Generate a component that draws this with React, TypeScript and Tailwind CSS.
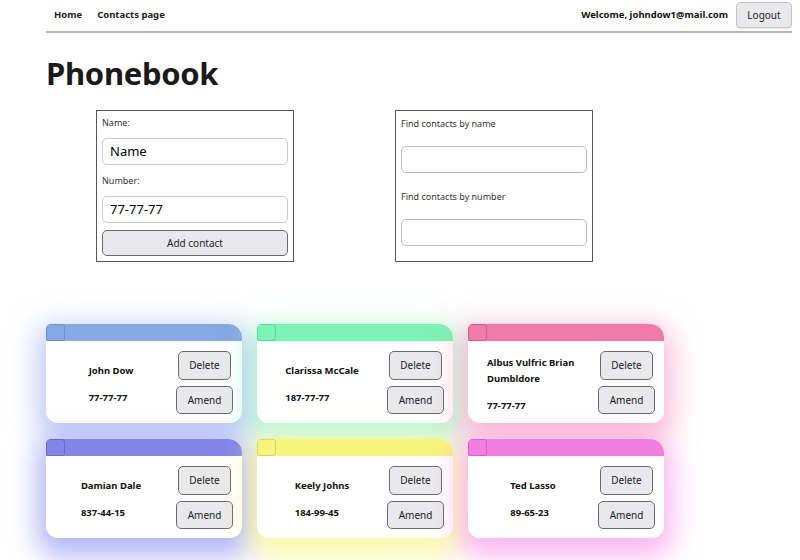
import React from "react";

const contacts = [
  { name: "John Dow", number: "77-77-77", head: "bg-[#86a8e4]", box: "border-[#7090cc]", shadow: "shadow-[0_10px_28px_8px_rgba(134,160,235,0.55)]" },
  { name: "Clarissa McCale", number: "187-77-77", head: "bg-[#7bf5b6]", box: "border-[#5fd89a]", shadow: "shadow-[0_10px_28px_8px_rgba(120,240,180,0.5)]" },
  { name: "Albus Vulfric Brian Dumbldore", number: "77-77-77", head: "bg-[#f27aa6]", box: "border-[#d65f8b]", shadow: "shadow-[0_10px_28px_8px_rgba(245,120,170,0.5)]" },
  { name: "Damian Dale", number: "837-44-15", head: "bg-[#8185ea]", box: "border-[#6569cf]", shadow: "shadow-[0_10px_28px_8px_rgba(125,128,240,0.6)]" },
  { name: "Keely Johns", number: "184-99-45", head: "bg-[#f7f57c]", box: "border-[#d9d760]", shadow: "shadow-[0_10px_28px_8px_rgba(245,245,110,0.6)]" },
  { name: "Ted Lasso", number: "89-65-23", head: "bg-[#f47de0]", box: "border-[#d860c4]", shadow: "shadow-[0_10px_28px_8px_rgba(245,120,225,0.55)]" },
];

const btn = "bg-[#e9e9ed] border border-[#6b6b6b] rounded-[5px] text-[10px] text-[#222] flex items-center justify-center";

function Card({ c }: { c: (typeof contacts)[number] }) {
  return (
    <div className={`w-[196px] h-[99px] bg-white rounded-[12px] rounded-tl-[5px] rounded-tr-[14px] overflow-hidden flex flex-col ${c.shadow}`}>
      <div className={`h-[17px] shrink-0 ${c.head}`}>
        <div className={`w-[19px] h-[17px] border ${c.box} rounded-[3px]`} />
      </div>
      <div className="flex-1 flex items-center pr-[9px]">
        <div className="flex-1 flex justify-center pt-[4px]">
          <div className="text-left font-bold text-[9.5px] text-[#111] w-max max-w-[92px]">
            <p className="leading-[16px]">{c.name}</p>
            <p className="leading-[16px] mt-[11px]">{c.number}</p>
          </div>
        </div>
        <div className="w-[57px] flex flex-col items-center gap-[6px] pt-[1px]">
          <button className={`${btn} w-[53px] h-[29px]`}>Delete</button>
          <button className={`${btn} w-[57px] h-[28px]`}>Amend</button>
        </div>
      </div>
    </div>
  );
}

export default function App() {
  return (
    <div className="min-h-[560px] bg-white text-[#222]" style={{ fontFamily: '"Noto Sans", "Open Sans", sans-serif' }}>
      <div className="ml-[46px] mr-[8px]">
        <nav className="h-[33px] flex items-center justify-between border-b-2 border-[#b5b5b5]">
          <div className="flex items-center gap-[15px] pl-[8px] font-bold text-[9.5px] text-[#222]">
            <span>Home</span>
            <span>Contacts page</span>
          </div>
          <div className="flex items-center gap-[8px] mb-[1px]">
            <span className="font-bold text-[9.5px] text-[#111]">Welcome, johndow1@mail.com</span>
            <button className="bg-[#e9e9ed] border border-[#c4c4c4] rounded-[4px] text-[10px] text-[#222] w-[56px] h-[26px] shadow-[0_1px_1px_rgba(0,0,0,0.1)]">Logout</button>
          </div>
        </nav>
        <h1 className="text-[31px] font-bold leading-[40px] mt-[20px] text-[#1a1a1a] tracking-[-0.3px]">Phonebook</h1>
        <div className="flex gap-[101px] ml-[50px] mt-[17px]">
          <div className="w-[198px] h-[152px] border border-[#555] px-[5px] pt-[6px] flex flex-col">
            <label className="text-[9px] text-[#333] leading-[12px]">Name:</label>
            <div className="mt-[9px] h-[27px] border border-[#c8c8c8] rounded-[5px] flex items-center px-[7px] text-[13px] text-black">Name</div>
            <label className="text-[9px] text-[#333] leading-[12px] mt-[10px]">Number:</label>
            <div className="mt-[9px] h-[27px] border border-[#c8c8c8] rounded-[5px] flex items-center px-[7px] text-[13px] text-black">77-77-77</div>
            <button className={`${btn} mt-[7px] h-[26px] w-full`}>Add contact</button>
          </div>
          <div className="w-[198px] h-[152px] border border-[#555] px-[5px] pt-[7px] flex flex-col">
            <label className="text-[9px] text-[#333] leading-[12px]">Find contacts by name</label>
            <div className="mt-[16px] h-[27px] border border-[#bdbdbd] rounded-[5px]" />
            <label className="text-[9px] text-[#333] leading-[12px] mt-[18px]">Find contacts by number</label>
            <div className="mt-[16px] h-[27px] border border-[#bdbdbd] rounded-[5px]" />
          </div>
        </div>
        <div className="mt-[62px] grid grid-cols-[196px_196px_196px] gap-x-[15px] gap-y-[16px]">
          {contacts.map((c) => (
            <Card key={c.name} c={c} />
          ))}
        </div>
      </div>
    </div>
  );
}
